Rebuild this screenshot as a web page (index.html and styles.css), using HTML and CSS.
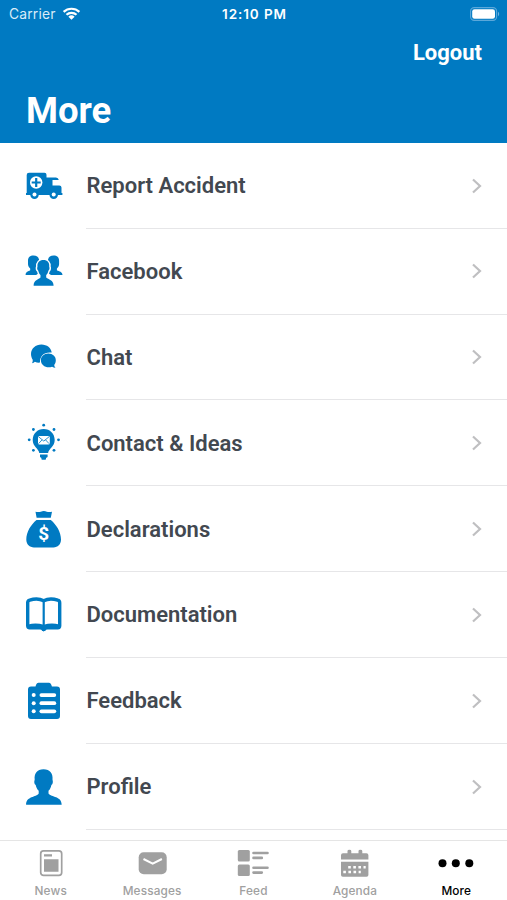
FILE: index.html
```html
<!DOCTYPE html>
<html lang="en">
<head>
  <meta charset="UTF-8" />
  <meta name="viewport" content="width=device-width, initial-scale=1" />
  <title>More</title>
  <link rel="stylesheet" href="styles.css">
</head>
<body>
  <div class="app">

    <header class="header">
      <div class="status-bar">
        <div class="carrier">
          <span>Carrier</span>
          <svg class="wifi" viewBox="0 0 20 15">
            <path d="M1.7 5.8a12 12 0 0 1 16.6 0M4.7 8.900a7.600 7.600 0 0 1 10.600 0" fill="none" stroke="#fff" stroke-width="2.300" />
            <path d="M10 14.200 6.700 11a4.800 4.800 0 0 1 6.600 0z" fill="#fff" />
          </svg>
        </div>
        <span class="clock">12:10 PM</span>
        <svg class="battery" viewBox="0 0 30 14">
          <rect x="0.6" y="0.6" width="26" height="12.8" rx="3.6" fill="none" stroke="#5ba8da" stroke-width="1.1" />
          <rect x="2.2" y="2.2" width="22.8" height="9.6" rx="2.3" fill="#fff" />
          <path d="M28 4.800a2.600 2.600 0 0 1 0 4.400z" fill="#6fb2de" />
        </svg>
      </div>
      <a class="logout">Logout</a>
      <h1>More</h1>
    </header>

    <main class="menu">
      <div class="item">
        <svg class="icon" viewBox="0 0 40 40">
          <path d="M5 6.700h15.500q2 0 2 2v2.800H32q2.300 0 2.800 2.500h-6.300v5.500h6.800q2.200 0 2.200 2v5.500h.9v2H2v-2h.7V9q0-2.300 2.300-2.300z" />
          <circle cx="10.500" cy="28.600" r="4.300" /><circle cx="29.700" cy="28.600" r="4.300" />
          <circle class="cut" cx="10.500" cy="28.600" r="2" /><circle class="cut" cx="29.700" cy="28.600" r="2" />
          <circle class="cut" cx="12.200" cy="16.500" r="6.200" />
          <path d="M11.100 12h2.200v3.400h3.400v2.200h-3.400V21h-2.200v-3.400H7.700v-2.200h3.400z" />
        </svg>
        <span class="label">Report Accident</span>
        <svg class="chevron" viewBox="0 0 12 18"><path d="m2 2.500 7 6.500-7 6.500" /></svg>
      </div>
      <div class="item">
        <svg class="icon" viewBox="0 0 40 40">
          <path d="M4 9.800c0-3.400 2.100-5.200 5.500-5.200 3 0 5 1.400 5.600 4.200V22l-3 2H1.600c0-3.400 2.500-3.500 4.600-4.800v-1.800C4.800 16.200 4 15 4 13z" />
          <path d="M35.100 9.800c0-3.400-2.100-5.200-5.500-5.200-3 0-5 1.400-5.600 4.200V22l3 2h11.500c0-3.400-3.300-3.500-5.600-4.800v-1.800c1.400-1.200 2.200-2.400 2.200-4.400z" />
          <path class="outlined" d="M19.400 9.100c4 0 6.200 2.600 5.800 6.500.8 2.300 0 3.500-.8 4.200-.4 2-1.100 3.200-2.200 4.200v2.600c2.200 2.200 7.400 2.100 7.400 8.200H9.600c0-6.100 5.100-6 6.900-8.200V24c-1.100-1-1.800-2.200-2.200-4.200-.9-.7-1.600-1.900-.8-4.200-.4-3.900 2-6.500 5.900-6.500z" />
        </svg>
        <span class="label">Facebook</span>
        <svg class="chevron" viewBox="0 0 12 18"><path d="m2 2.500 7 6.500-7 6.500" /></svg>
      </div>
      <div class="item">
        <svg class="icon" viewBox="0 0 40 40">
          <path d="M17.400 7.600c5.600 0 9.900 3.600 10.300 8-7.200-1-12.100 3.200-11.700 10-1.800.2-3.700-.1-5.100-.8-.7.700-1.700 1.200-3 1.500.8-1.200.9-2.400.8-3.600C7.700 21 7 19.200 7 17c0-5.300 4.700-9.400 10.400-9.400z" />
          <path d="M24.300 16.600c4.500 0 7.500 3 7.500 6.700 0 1.900-.7 3.600-1.600 4.700 0 1 .5 1.900 1.300 2.800-1.300 0-2.500-.4-3.400-1-5.700 1.900-11.200-1.200-11.200-6.500 0-3.700 3-6.700 7.400-6.700z" />
        </svg>
        <span class="label">Chat</span>
        <svg class="chevron" viewBox="0 0 12 18"><path d="m2 2.500 7 6.500-7 6.500" /></svg>
      </div>
      <div class="item">
        <svg class="icon" viewBox="0 0 40 40">
          <path d="M19.700 6.100c6.400 0 11 4.800 11 10.900 0 6.800-5.800 8.300-6.600 13h-8.800c-.8-4.700-6.600-6.200-6.600-13 0-6.100 4.600-10.900 11-10.900zM16 31.500h7.600v2.600l-1.600 1v.9q0 .8-.8.800h-3q-.8 0-.8-.8v-.9l-1.400-1z" />
          <circle cx="19.700" cy="2.200" r="1.400" /><circle cx="9.400" cy="6.500" r="1.400" /><circle cx="30" cy="6.500" r="1.400" />
          <circle cx="5.200" cy="16.800" r="1.400" /><circle cx="34.500" cy="16.800" r="1.400" />
          <circle cx="9.400" cy="27.300" r="1.400" /><circle cx="30" cy="27.300" r="1.400" />
          <rect class="cut" x="14" y="12.900" width="11.800" height="8.500" rx="1.500" />
          <path class="line thin" d="m14.600 13.800 5.200 4.300 5.200-4.300M14.600 20.600l3.500-3.800M25 20.600l-3.500-3.800" />
        </svg>
        <span class="label">Contact &amp; Ideas</span>
        <svg class="chevron" viewBox="0 0 12 18"><path d="m2 2.500 7 6.500-7 6.500" /></svg>
      </div>
      <div class="item">
        <svg class="icon" viewBox="0 0 40 40">
          <path d="M11.500 2.700q3 .8 5.300 0 3-1.300 6 0 2.300.8 5.200 0l-1.200 6H12.600z" />
          <path d="M12.500 11.100h14.300c5.500 4.500 10.200 12 10.200 19.400 0 5-3.300 7.900-7.500 7.900H10c-4.300 0-7.700-2.900-7.700-7.900 0-7.400 4.700-14.900 10.200-19.400z" />
          <text class="dollar" x="19.700" y="31">$</text>
        </svg>
        <span class="label">Declarations</span>
        <svg class="chevron" viewBox="0 0 12 18"><path d="m2 2.500 7 6.500-7 6.500" /></svg>
      </div>
      <div class="item">
        <svg class="icon" viewBox="0 0 40 40">
          <path class="line" d="M19.700 5.800C15.500 3.500 10.500 3.500 5.700 5.200q-2 .6-2 2.500v23q0 2 2 2h10.200q2.700 0 3.800 1.300 1.100-1.300 3.800-1.300h10.200q2 0 2-2v-23q0-1.900-2-2.500c-4.800-1.700-9.800-1.700-14 .6z" />
          <path class="line slim" d="M19.700 5.500v25" />
          <path d="M4 29.500q8-2.300 15.700.3 7.700-2.600 15.700-.3v4H22.500l-1.200 2.400h-3.200l-1.200-2.400H4z" />
        </svg>
        <span class="label">Documentation</span>
        <svg class="chevron" viewBox="0 0 12 18"><path d="m2 2.500 7 6.500-7 6.500" /></svg>
      </div>
      <div class="item">
        <svg class="icon" viewBox="0 0 40 40">
          <path d="M7 5.600h4.500q.8-3.800 3-3.800h10.400q2.200 0 3 3.800H33q3 0 3 3v26.500q0 3-3 3H7q-3 0-3-3V8.600q0-3 3-3z" />
          <g class="cut">
            <circle cx="9.700" cy="14.100" r="2" /><circle cx="9.700" cy="22.200" r="2" /><circle cx="9.700" cy="30.300" r="2" />
            <rect x="15.500" y="12.200" width="16.700" height="3.800" rx="1.900" />
            <rect x="15.500" y="20.300" width="16.700" height="3.800" rx="1.900" />
            <rect x="15.500" y="28.400" width="16.700" height="3.800" rx="1.900" />
          </g>
        </svg>
        <span class="label">Feedback</span>
        <svg class="chevron" viewBox="0 0 12 18"><path d="m2 2.500 7 6.500-7 6.500" /></svg>
      </div>
      <div class="item">
        <svg class="icon" viewBox="0 0 40 40">
          <path d="M19.500 2.200c6.600 0 9.700 4.400 9 10.300.8 2.800.2 4.700-1.100 5.600-.5 2.600-1.400 4.400-2.900 5.700v2.800c2.900 3.900 13.200 2.600 13.200 11.200H2.100c0-8.600 10.200-7.300 12.600-11.200v-2.800c-1.500-1.300-2.500-3.100-3-5.700-1.300-.9-1.900-2.800-1-5.600-.7-5.900 2.300-10.300 8.800-10.300z" />
        </svg>
        <span class="label">Profile</span>
        <svg class="chevron" viewBox="0 0 12 18"><path d="m2 2.500 7 6.500-7 6.500" /></svg>
      </div>
    </main>

    <nav class="tabs">
      <a class="tab">
        <svg class="tab-icon" viewBox="0 0 36 28">
          <rect x="7.700" y="1.900" width="21" height="24.500" rx="2.800" fill="none" stroke="currentColor" stroke-width="1.700" />
          <path d="M11 5.200h8v2.200h-8zM11 10.200h14.500v12.600H11z" />
        </svg>
        <span>News</span>
      </a>
      <a class="tab">
        <svg class="tab-icon" viewBox="0 0 36 28">
          <rect x="4.700" y="3.200" width="28" height="22" rx="5" />
          <path d="m9.500 10 9.200 4.600 9.200-4.600" fill="none" stroke="#fff" stroke-width="2" />
        </svg>
        <span>Messages</span>
      </a>
      <a class="tab">
        <svg class="tab-icon" viewBox="0 0 36 28">
          <rect x="2.800" y="1" width="12" height="11.500" rx="1.500" /><rect x="2.800" y="15.500" width="12" height="11.500" rx="1.500" />
          <path d="M18.500 4h14M18.500 8.900h8.300M18.500 18.700h14M18.500 23.600h8.300" fill="none" stroke="currentColor" stroke-width="2.600" stroke-linecap="round" />
        </svg>
        <span>Feed</span>
      </a>
      <a class="tab">
        <svg class="tab-icon" viewBox="0 0 36 28">
          <path d="M6 4.200h4.500V2q0-1.300 1.900-1.300T14.300 2v2.200h7.200V2q0-1.300 1.900-1.300T25.300 2v2.200h4.100q2 0 2 2v4.300H4V6.200q0-2 2-2zM4 12.800h27.400V26q0 1.800-1.800 1.800H5.800Q4 27.800 4 26z" />
          <path d="M11.200 18.300h17.500M6.300 23h17.500" fill="none" stroke="#fff" stroke-width="2.600" stroke-dasharray="2.600 2.500" />
        </svg>
        <span>Agenda</span>
      </a>
      <a class="tab active">
        <svg class="tab-icon" viewBox="0 0 36 28">
          <circle cx="4.500" cy="14.300" r="4" /><circle cx="17.800" cy="14.300" r="4" /><circle cx="31.300" cy="14.300" r="4" />
        </svg>
        <span>More</span>
      </a>
    </nav>

  </div>
</body>
</html>
```
FILE: styles.css
```css
* {
  box-sizing: border-box;
}

body {
  margin: 0;
  font-family: Roboto, sans-serif;
  background: #fff;
  color: #424850;
}

.app {
  display: flex;
  flex-direction: column;
  height: 900px;
  overflow: hidden;
}

/* Header */
.header {
  display: flex;
  flex-direction: column;
  flex: none;
  height: 142.5px;
  background: #007ac2;
  color: #fff;
}

.status-bar {
  display: grid;
  grid-template-columns: 1fr auto 1fr;
  align-items: center;
  height: 27px;
  padding: 0 7px 0 9px;
  font-family: Inter, sans-serif;
  font-size: 13.8px;
}

.carrier {
  display: flex;
  align-items: center;
  gap: 6px;
  color: #d9ecf8;
  letter-spacing: 0.2px;
}

.wifi {
  width: 19px;
  height: 15px;
}

.clock {
  font-weight: 600;
  font-size: 13.5px;
  letter-spacing: 0.9px;
}

.battery {
  justify-self: end;
  width: 30px;
  height: 14px;
}

.logout {
  align-self: flex-end;
  margin: 12px 25px 0 0;
  font-size: 22px;
  line-height: 28px;
  font-weight: 700;
}

h1 {
  margin: 21px 0 0 26px;
  font-size: 36.5px;
  line-height: 46px;
  font-weight: 700;
}

/* Menu list */
.menu {
  flex: 1;
  min-height: 0;
  padding-top: 0.6px;
  overflow: hidden;
}

.item {
  display: grid;
  grid-template-columns: 62.5px 1fr 12px;
  align-items: center;
  height: 85.9px;
  padding: 0 24px 1px;
  background: linear-gradient(#e6e6e8, #e6e6e8) 86px 100% / 100% 1.3px no-repeat;
}

.icon {
  width: 40px;
  height: 40px;
  fill: #007ac2;
}

.icon .cut {
  fill: #fff;
}

.icon .outlined {
  stroke: #fff;
  stroke-width: 3;
  paint-order: stroke;
}

.icon .line {
  fill: none;
  stroke: #007ac2;
  stroke-width: 3.4;
}

.icon .slim {
  stroke-width: 2.2;
}

.icon .thin {
  stroke-width: 0.8;
}

.icon .dollar {
  fill: #fff;
  font-size: 19px;
  font-weight: 700;
  text-anchor: middle;
}

.label {
  padding-top: 1px;
  font-size: 22px;
  line-height: 28px;
  font-weight: 600;
}

.chevron {
  width: 12px;
  height: 18px;
  fill: none;
  stroke: #bfbfc1;
  stroke-width: 2.2;
}

/* Bottom tabs */
.tabs {
  display: grid;
  grid-template-columns: repeat(5, 1fr);
  flex: none;
  height: 60.5px;
  border-top: 1.5px solid #e5e5e5;
  background: #fff;
}

.tab {
  display: flex;
  flex-direction: column;
  align-items: center;
  padding-top: 8px;
  color: #a0a0a0;
  font-family: Inter, sans-serif;
  font-size: 11.8px;
  line-height: 16px;
  font-weight: 500;
  letter-spacing: 0.15px;
}

.tab-icon {
  width: 36px;
  height: 28px;
  margin-bottom: 6px;
  fill: currentColor;
}

.active {
  color: #000;
}
```
